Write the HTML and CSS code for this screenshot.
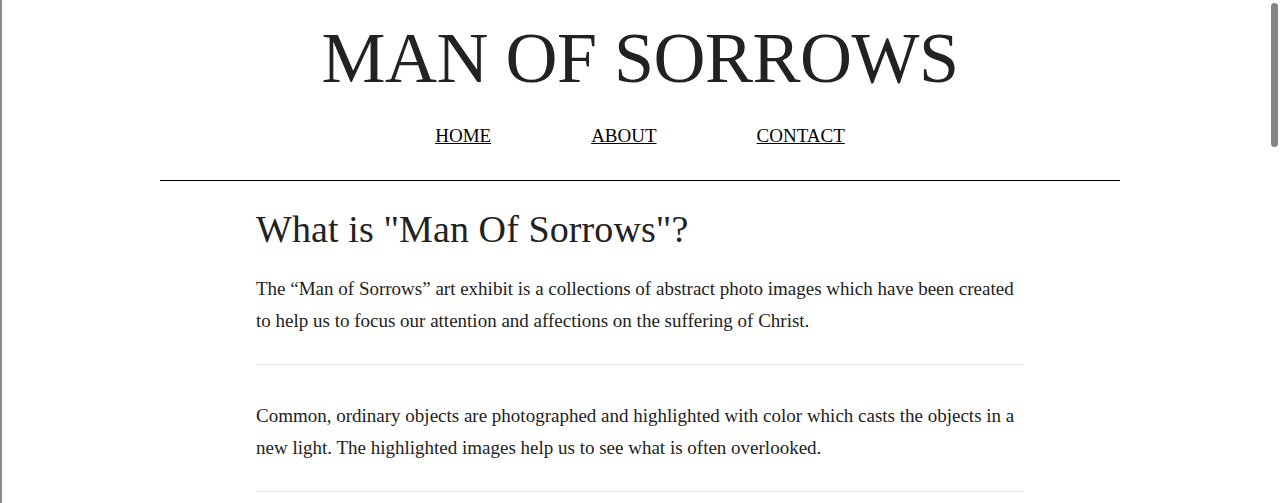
FILE: index.html
```html
<!DOCTYPE html>
<html>
<head>
<meta charset="utf-8">
<title>Man of Sorrows</title>
<link rel="stylesheet" href="styles.css">
</head>
<body>
<div class="edge"></div>
<div class="scrollbar"></div>
<header class="site-header">
  <h1 class="site-title">MAN OF SORROWS</h1>
  <nav class="nav">
    <a href="#">HOME</a>
    <a href="#">ABOUT</a>
    <a href="#">CONTACT</a>
  </nav>
</header>
<main class="content">
  <h2 class="heading">What is "Man Of Sorrows"?</h2>
  <p class="para">The “Man of Sorrows” art exhibit is a collections of abstract photo images which have been created to help us to focus our attention and affections on the suffering of Christ.</p>
  <hr class="divider">
  <p class="para">Common, ordinary objects are photographed and highlighted with color which casts the objects in a new light. The highlighted images help us to see what is often overlooked.</p>
  <hr class="divider">
</main>
</body>
</html>
```
FILE: styles.css
```css
html, body {
  margin: 0;
  padding: 0;
  background: #fff;
  overflow: hidden;
  height: 503px;
}
body {
  font-family: "Liberation Serif", "Times New Roman", serif;
  color: #222;
}
.edge {
  position: fixed;
  left: 0;
  top: 0;
  bottom: 0;
  width: 2px;
  background: #8a8a92;
}
.scrollbar {
  position: fixed;
  right: 2px;
  top: 3px;
  width: 7px;
  height: 144px;
  border-radius: 4px;
  background: #858585;
}
.site-header {
  width: 960px;
  margin: 0 auto;
  padding-top: 22px;
  border-bottom: 1px solid #000;
  text-align: center;
}
.site-title {
  margin: 0;
  font-size: 72px;
  line-height: 72px;
  font-weight: normal;
  color: #222;
  letter-spacing: -0.5px;
}
.nav {
  margin-top: 33px;
  padding-bottom: 35px;
  font-size: 19px;
  line-height: 18px;
  display: flex;
  justify-content: center;
  gap: 100px;
}
.nav a {
  color: #000;
  text-decoration: underline;
}
.content {
  width: 768px;
  margin: 0 auto;
  padding-top: 27px;
}
.heading {
  margin: 0 0 22px;
  font-size: 38px;
  line-height: 43px;
  font-weight: normal;
  color: #222;
  letter-spacing: 0.1px;
}
.para {
  margin: 0 0 27px;
  font-size: 19px;
  line-height: 32px;
  color: #222;
}
.divider {
  margin: 0 0 35px;
  border: 0;
  border-top: 1px solid #e3e3e3;
  height: 0;
}
```
